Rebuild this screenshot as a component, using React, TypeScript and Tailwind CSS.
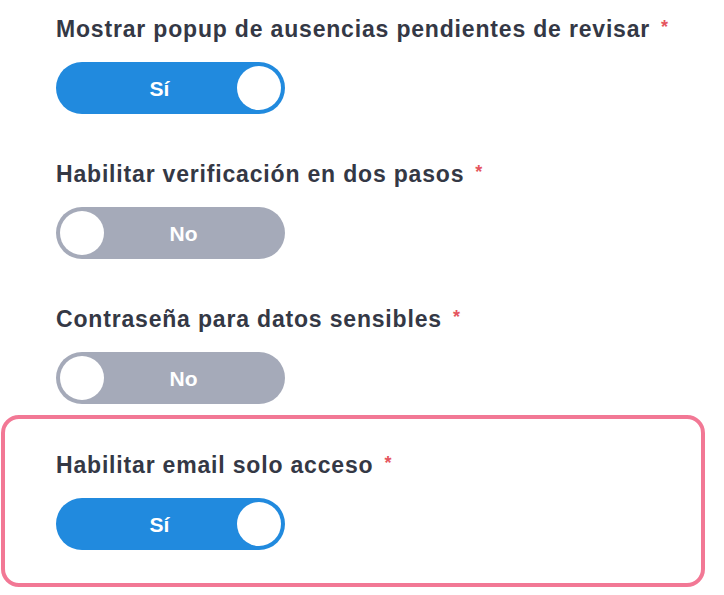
import React from "react";

function Toggle({ on }: { on: boolean }) {
  return (
    <div
      className={
        "relative flex h-[52px] w-[229px] items-center rounded-full " +
        (on ? "bg-[#218ade] pr-[22px]" : "bg-[#a5aab9] pl-[26px]")
      }
    >
      <span className="flex-1 text-center text-[21px] font-bold leading-none text-white">
        {on ? "Sí" : "No"}
      </span>
      <span
        className={
          "absolute top-[4px] h-[44px] w-[44px] rounded-full bg-white " +
          (on ? "right-[4px]" : "left-[4px]")
        }
      />
    </div>
  );
}

function Field({ label, on }: { label: string; on: boolean }) {
  return (
    <div className="flex flex-col">
      <div className="flex h-[26px] items-start text-[23px] font-bold leading-[26px] tracking-[0.82px] text-[#343845]">
        <span>{label}</span>
        <span className="ml-[11px] text-[18px] leading-[22px] text-[#e5555e]">*</span>
      </div>
      <div className="mt-[20px]">
        <Toggle on={on} />
      </div>
    </div>
  );
}

export default function App() {
  return (
    <div
      className="h-[595px] w-[724px] overflow-hidden bg-white"
      style={{ fontFamily: '"Liberation Sans", Arial, sans-serif' }}
    >
      <div className="flex flex-col gap-[47px] pl-[56px] pt-[16px]">
        <Field label="Mostrar popup de ausencias pendientes de revisar" on={true} />
        <Field label="Habilitar verificación en dos pasos" on={false} />
        <Field label="Contraseña para datos sensibles" on={false} />
      </div>
      <div className="ml-[1px] mt-[11px] w-[704px] rounded-[18px] border-[4px] border-[#f27895] pb-[33px] pl-[51px] pt-[33px]">
        <Field label="Habilitar email solo acceso" on={true} />
      </div>
    </div>
  );
}
